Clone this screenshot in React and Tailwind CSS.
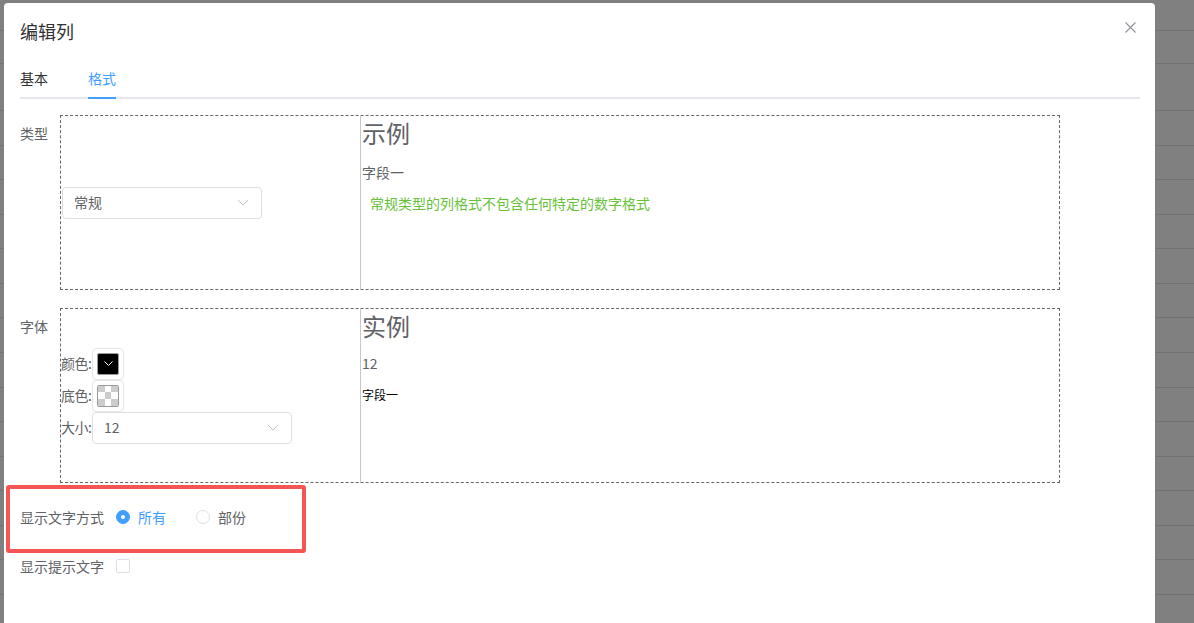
import React, { useState } from "react";

const font = "font-['Noto_Sans_CJK_SC','Noto_Sans',sans-serif]";

const rowHeights = [31, 33, 47, 35, 34, 35, 34, 35, 34, 35, 35, 34, 35, 34, 35, 34, 35, 34];

const Chevron = ({ className = "" }) => (
  <svg width="12" height="7" viewBox="0 0 12 7" className={className} fill="none">
    <path d="M1 1l5 5 5-5" stroke="currentColor" strokeWidth="1" />
  </svg>
);

const Select = ({ value, width = "w-[200px]" }) => (
  <div
    className={`${width} h-[32px] shrink-0 flex items-center justify-between rounded-[4px] border border-[#dcdfe6] bg-white pl-[11px] pr-[12px] text-[14px] text-[#606266]`}
  >
    <span>{value}</span>
    <Chevron className="text-[#c0c4cc]" />
  </div>
);

const Radio = ({ checked, label, onClick }) => (
  <label className="flex items-center cursor-pointer mr-[30px]" onClick={onClick}>
    <span
      className={`w-[14px] h-[14px] rounded-full border flex items-center justify-center ${
        checked ? "bg-[#409eff] border-[#409eff]" : "bg-white border-[#dcdfe6]"
      }`}
    >
      {checked && <span className="w-[4px] h-[4px] rounded-full bg-white" />}
    </span>
    <span className={`ml-[8px] text-[14px] ${checked ? "text-[#409eff]" : "text-[#606266]"}`}>{label}</span>
  </label>
);

const ColorBox = ({ children }) => (
  <div className="w-[32px] h-[32px] shrink-0 rounded-[4px] border border-[#e6e6e6] p-[4px] bg-white">{children}</div>
);

const App = () => {
  const [tab, setTab] = useState("format");
  const [mode, setMode] = useState("all");
  const [tip, setTip] = useState(false);

  return (
    <div className={`relative w-[1194px] h-[623px] overflow-hidden bg-[#808080] ${font}`}>
      {/* page behind the overlay */}
      <div className="absolute inset-0 flex flex-col">
        {rowHeights.map((h, i) => (
          <div key={i} className="shrink-0 border-b border-[#727272]" style={{ height: h }} />
        ))}
      </div>

      <div className="relative ml-[4px] mt-[3px] w-[1151px] h-[640px] bg-white rounded-t-[4px] pl-[16px] pr-[15px]">
        <div className="pt-[16px] h-[40px]">
          <span className="text-[18px] leading-[24px] text-[#303133]">编辑列</span>
        </div>
        <button className="absolute top-[16px] right-[17px] w-[16px] h-[16px] flex items-center justify-center text-[#909399]">
          <svg width="11" height="11" viewBox="0 0 11 11" fill="none">
            <path d="M0.5 0.5l10 10M10.5 0.5l-10 10" stroke="currentColor" strokeWidth="1.1" />
          </svg>
        </button>

        {/* tabs */}
        <div className="mt-[16px] h-[40px] flex border-b-2 border-[#e4e7ed] text-[14px]">
          <div
            className={`pr-[20px] flex items-center cursor-pointer ${tab === "basic" ? "text-[#409eff]" : "text-[#303133]"}`}
            onClick={() => setTab("basic")}
          >
            基本
          </div>
          <div className="px-[20px] flex flex-col cursor-pointer" onClick={() => setTab("format")}>
            <div className={`flex-1 flex items-center ${tab === "format" ? "text-[#409eff]" : "text-[#303133]"}`}>格式</div>
            <div className={`h-[2px] -mb-[2px] ${tab === "format" ? "bg-[#409eff]" : ""}`} />
          </div>
        </div>

        {/* 类型 */}
        <div className="mt-[16px] flex text-[14px]">
          <div className="w-[40px] leading-[36px] text-[#606266]">类型</div>
          <div className="w-[1000px] h-[175px] flex border border-dashed border-[#666]">
            <div className="w-[300px] border-r border-[#c8c8c8] flex items-center pl-[1px]">
              <Select value="常规" />
            </div>
            <div className="flex-1 pl-[1px]">
              <div className="text-[24px] leading-[34px] text-[#606266]">示例</div>
              <div className="mt-[12px] leading-[20px] text-[#606266]">字段一</div>
              <div className="mt-[11px] pl-[8px] leading-[20px] text-[#67c23a]">常规类型的列格式不包含任何特定的数字格式</div>
            </div>
          </div>
        </div>

        {/* 字体 */}
        <div className="mt-[18px] flex text-[14px]">
          <div className="w-[40px] leading-[36px] text-[#606266]">字体</div>
          <div className="w-[1000px] h-[175px] flex border border-dashed border-[#666]">
            <div className="w-[300px] border-r border-[#c8c8c8] flex flex-col justify-center text-[#606266]">
              <div className="flex items-center h-[32px]">
                <span className="w-[31px] shrink-0 whitespace-nowrap tracking-[-0.5px]">颜色:</span>
                <ColorBox>
                  <div className="w-full h-full bg-black border border-[#999] rounded-[2px] flex items-center justify-center">
                    <svg width="9" height="5" viewBox="0 0 9 5" fill="none">
                      <path d="M0.5 0.5l4 4 4-4" stroke="white" strokeWidth="1" />
                    </svg>
                  </div>
                </ColorBox>
              </div>
              <div className="flex items-center h-[32px]">
                <span className="w-[31px] shrink-0 whitespace-nowrap tracking-[-0.5px]">底色:</span>
                <ColorBox>
                  <div className="w-full h-full border border-[#999] rounded-[2px] grid grid-cols-3 overflow-hidden">
                    {[0, 1, 2, 3, 4, 5, 6, 7, 8].map((i) => (
                      <div key={i} className={i % 2 === 0 ? "bg-[#cccccc]" : "bg-white"} />
                    ))}
                  </div>
                </ColorBox>
              </div>
              <div className="flex items-center h-[32px]">
                <span className="w-[31px] shrink-0 whitespace-nowrap tracking-[-0.5px]">大小:</span>
                <Select value="12" />
              </div>
            </div>
            <div className="flex-1 pl-[1px]">
              <div className="text-[24px] leading-[34px] text-[#606266]">实例</div>
              <div className="mt-[10px] leading-[20px] text-[#606266]">12</div>
              <div className="mt-[14px] text-[12px] leading-[16px] text-black">字段一</div>
            </div>
          </div>
        </div>

        {/* 显示文字方式 (highlighted) */}
        <div className="mt-[2px] -ml-[14px] w-[300px] h-[68px] border-4 border-[#f45656] rounded-[3px] pl-[10px] pb-[4px] flex items-center text-[14px]">
          <div className="w-[96px] text-[#606266]">显示文字方式</div>
          <Radio checked={mode === "all"} label="所有" onClick={() => setMode("all")} />
          <Radio checked={mode === "part"} label="部份" onClick={() => setMode("part")} />
        </div>

        <div className="h-[26px] flex items-center text-[14px]">
          <div className="w-[96px] text-[#606266]">显示提示文字</div>
          <span
            className={`w-[14px] h-[14px] rounded-[2px] border cursor-pointer ${tip ? "bg-[#409eff] border-[#409eff]" : "bg-white border-[#dcdfe6]"}`}
            onClick={() => setTip(!tip)}
          />
        </div>
      </div>
    </div>
  );
};

export default App;
